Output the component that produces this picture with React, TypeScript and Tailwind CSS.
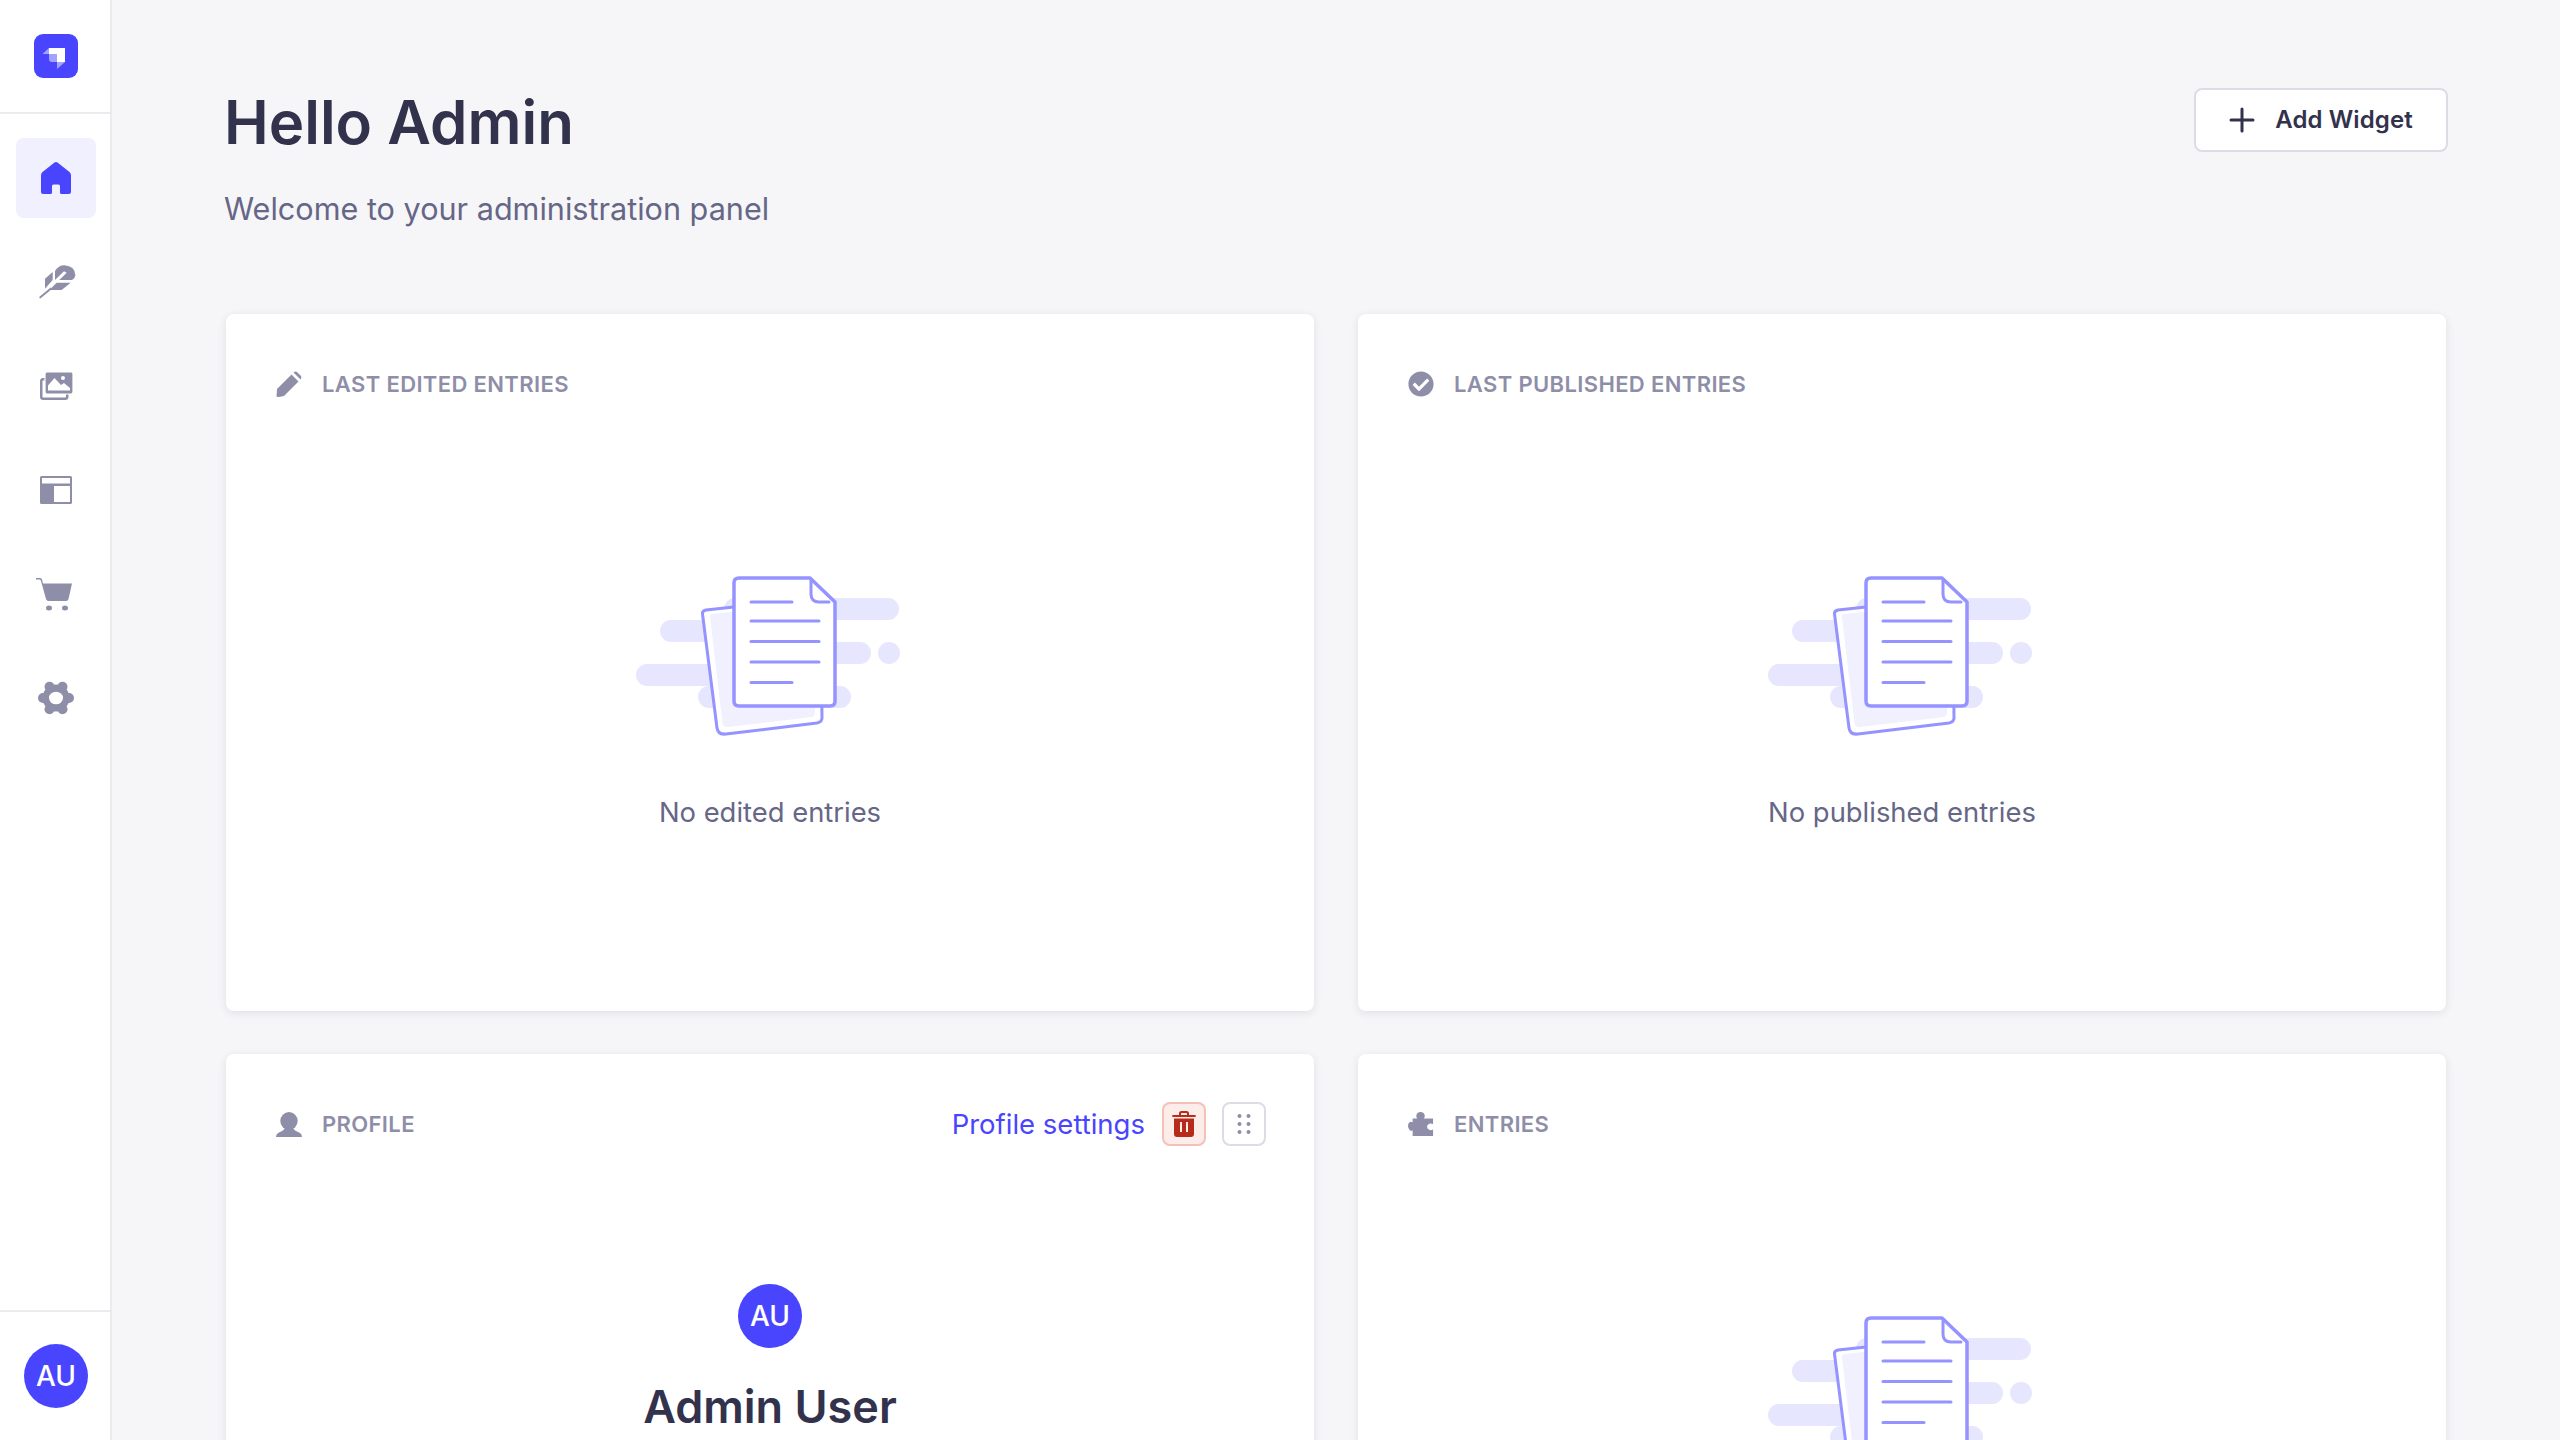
import React from "react";
import { FaCheckCircle } from "react-icons/fa";

function Illustration() {
  return (
    <svg width="340" height="220" viewBox="0 0 340 220" fill="none" className="block shrink-0">
      <g fill="#e6e6ff">
        <rect x="124" y="58" width="175" height="22" rx="11" />
        <rect x="60" y="80" width="120" height="22" rx="11" />
        <rect x="180" y="102" width="91" height="22" rx="11" />
        <circle cx="289" cy="113" r="11" />
        <rect x="36" y="124" width="130" height="22" rx="11" />
        <rect x="98" y="146" width="153" height="22" rx="11" />
      </g>
      <path d="M106 70 L218 58 Q221 58 221 62 L222 178 Q222 182 217 183 L126 194 Q118 195 117 188 L102.500 74 Q102 71 106 70Z" fill="#ffffff" stroke="#9593ff" strokeWidth="3" strokeLinejoin="round" />
      <path d="M112 74 L212 64 Q214 64 214 67 L215 172 Q215 176 212 177 L128 187 Q123 187.500 122.500 183 L110 77 Q110 74 112 74Z" fill="#f0f0ff" />
      <path d="M139 38 H210 L235 62 V161 Q235 166 230 166 H139 Q134 166 134 161 V43 Q134 38 139 38Z" fill="#ffffff" stroke="#9593ff" strokeWidth="3.5" strokeLinejoin="round" />
      <path d="M211 39 V54 Q211 62 219 62 H229" stroke="#9593ff" strokeWidth="3" strokeLinecap="round" fill="none" />
      <g stroke="#9593ff" strokeWidth="3" strokeLinecap="round">
        <path d="M151 62 H192" />
        <path d="M151 81 H219" />
        <path d="M151 101.500 H219" />
        <path d="M151 122 H219" />
        <path d="M151 142.500 H192" />
      </g>
    </svg>
  );
}

function NavItem({ active, children }: { active?: boolean; children: React.ReactNode }) {
  return (
    <div className={active ? "w-20 h-20 rounded-lg bg-[#f0f0ff] flex items-center justify-center" : "w-20 h-20 rounded-lg flex items-center justify-center"}>
      {children}
    </div>
  );
}

function Avatar() {
  return (
    <div className="w-16 h-16 rounded-full bg-[#4945ff] flex items-center justify-center text-white text-[28px] font-medium">AU</div>
  );
}

function Label({ icon, children }: { icon: React.ReactNode; children: React.ReactNode }) {
  return (
    <div className="flex items-center h-11">
      <span className="w-[26px] h-[26px] flex items-center justify-center text-[#8e8ea9]">{icon}</span>
      <span className="ml-[20px] text-[22px] font-semibold tracking-[0.37px] text-[#8e8ea9] uppercase">{children}</span>
    </div>
  );
}

function Card({ children }: { children: React.ReactNode }) {
  return <div className="h-[697px] bg-white rounded-lg shadow-[0_2px_8px_rgba(33,33,52,0.1)] pt-[48px] px-[50px]">{children}</div>;
}

function Empty({ text }: { text: string }) {
  return (
    <div className="flex flex-col items-center mt-[134px]">
      <Illustration />
      <div className="mt-[34px] text-[27.4px] leading-[36px] text-[#666687]">{text}</div>
    </div>
  );
}

export default function App() {
  return (
    <div className="w-[2560px] h-[1440px] overflow-hidden flex bg-[#f6f6f9] font-['Inter',sans-serif]">
      <aside className="w-[112px] h-full shrink-0 bg-white border-r-2 border-[#eaeaef] flex flex-col">
        <div className="h-[114px] shrink-0 pl-[2px] border-b-2 border-[#eaeaef] flex items-center justify-center">
          <svg width="44" height="44" viewBox="0 0 44 44">
            <rect width="44" height="44" rx="9" fill="#4945ff" />
            <path d="M15 14 H31 V28 H23 V20 H15Z" fill="#ffffff" />
            <path d="M15 20 H23 V28 H18 Q15 28 15 25Z M8.500 20 L15 14 V20Z M23 28 H31 L23 35Z" fill="#ffffff" opacity="0.5" />
          </svg>
        </div>
        <nav className="flex-1 pl-[2px] flex flex-col items-center gap-6 pt-6">
          <NavItem active>
            <svg width="30" height="32" viewBox="0 0 30 32" fill="#4945ff"><path d="M13.500 .5 Q15 -.3 16.500 .5 L28.500 10 Q30 11.200 30 13.500 V30 Q30 32 28 32 H20.500 Q19 32 19 30.500 V24 Q19 22.500 17.500 22.500 H12.500 Q11 22.500 11 24 V30.500 Q11 32 9.500 32 H2 Q0 32 0 30 V13.500 Q0 11.200 1.500 10Z" /></svg>
          </NavItem>
          <NavItem>
            <svg width="52" height="52" viewBox="0 0 156 156" fill="#8e8ea9">
              <path d="M45 68 L68 48 V72 L45 98Z" />
              <path d="M75 45 Q85 28 103 28 Q135 30 136 58 Q135 68 125 72 H88 L110 50 L102 46 L75 72Z" />
              <path d="M80 80 H122 L95 102 H58Z" />
              <path d="M31 124 L62 98" stroke="#8e8ea9" strokeWidth="6" strokeLinecap="round" />
            </svg>
          </NavItem>
          <NavItem>
            <svg width="33" height="28" viewBox="0 0 33 28">
              <rect x="1.250" y="7.250" width="26" height="19.500" rx="2" fill="none" stroke="#8e8ea9" strokeWidth="2.500" />
              <rect x="5" y="0" width="28" height="22" rx="2" fill="#8e8ea9" stroke="#ffffff" strokeWidth="1.200" />
              <path d="M8 18.500 V13.500 L14.500 6 L21 13 L24 11 L30 16 V18.500Z" fill="#ffffff" />
              <circle cx="23" cy="6" r="2" fill="#ffffff" />
            </svg>
          </NavItem>
          <NavItem>
            <svg width="32" height="28" viewBox="0 0 32 28"><path fillRule="evenodd" fill="#8e8ea9" d="M1.500 0 H30.500 Q32 0 32 1.500 V26.500 Q32 28 30.500 28 H1.500 Q0 28 0 26.500 V1.500 Q0 0 1.500 0Z M2 2 V7.500 H30 V2Z M14 10 V26 H30 V10Z" /></svg>
          </NavItem>
          <NavItem>
            <svg width="36" height="33" viewBox="0 0 36 33" fill="#8e8ea9" className="-translate-x-[2px]"><path d="M0 0 H4 Q5.500 0 6 1.500 L7 5.500 H36 L32.500 21 Q32 23 30 23 H12.500 Q10.500 23 10 21 L5 3 Q4.700 1.500 3.500 1.500 H0Z" /><ellipse cx="13" cy="30" rx="3" ry="2.500" /><ellipse cx="29" cy="30" rx="3" ry="2.500" /></svg>
          </NavItem>
          <NavItem>
            <svg width="36" height="34" viewBox="0 0 36 34" fill="#8e8ea9">
              <circle cx="18" cy="17" r="13.500" />
              <circle cx="5" cy="17" r="5" />
              <circle cx="31" cy="17" r="5" />
              <circle cx="11.500" cy="5.800" r="5" />
              <circle cx="24.500" cy="5.800" r="5" />
              <circle cx="11.500" cy="28.200" r="5" />
              <circle cx="24.500" cy="28.200" r="5" />
              <ellipse cx="18" cy="17" rx="7" ry="6.300" fill="#ffffff" />
            </svg>
          </NavItem>
        </nav>
        <div className="h-[130px] shrink-0 pl-[2px] border-t-2 border-[#eaeaef] flex items-center justify-center">
          <Avatar />
        </div>
      </aside>
      <main className="flex-1 min-w-0 pl-[112px] pr-[112px]">
        <header className="flex justify-between items-start pt-[88px]">
          <div>
            <h1 className="text-[60px] leading-[68px] font-semibold text-[#32324d]">Hello Admin</h1>
            <p className="mt-[33px] text-[30.6px] leading-[40px] text-[#666687]">Welcome to your administration panel</p>
          </div>
          <button className="w-[254px] h-16 flex items-center justify-center gap-[20px] bg-white border-2 border-[#dcdce4] rounded-lg text-[#32324d] text-[24px] font-semibold tracking-[0.1px]">
            <svg width="26" height="26" viewBox="0 0 26 26" stroke="#32324d" strokeWidth="3" strokeLinecap="round"><path d="M13 2 V24 M2 13 H24" /></svg>
            Add Widget
          </button>
        </header>
        <div className="mt-[85px] px-[2px] grid grid-cols-2 gap-x-[44px] gap-y-[43px]">
          <Card>
            <Label icon={
              <svg width="26" height="26" viewBox="0 0 26 26" fill="currentColor">
                <path d="M0.500 25.500 L1 18 L15.500 3.500 L22.500 10.500 L8 25 Q1 26.500 0.500 25.500Z" />
                <path d="M17.500 1.500 Q19.500 0 21 1 L25 5 Q26 6.500 24.500 8.500Z" />
              </svg>
            }>Last edited entries</Label>
            <Empty text="No edited entries" />
          </Card>
          <Card>
            <Label icon={<FaCheckCircle size={26} />}>Last published entries</Label>
            <Empty text="No published entries" />
          </Card>
          <Card>
            <div className="flex items-center justify-between -mr-[2px]">
              <Label icon={
                <svg width="26" height="25" viewBox="0 0 26 25" fill="currentColor">
                  <ellipse cx="13" cy="9" rx="8.700" ry="9" />
                  <path d="M9 16 H17 L19 18.500 L24 21 Q26 22.500 26 25 H0 Q0 22.500 2 21 L7 18.500Z" />
                </svg>
              }>Profile</Label>
              <div className="flex items-center gap-4">
                <span className="text-[27.5px] leading-[36px] text-[#4945ff] mr-[1px]">Profile settings</span>
                <div className="w-11 h-11 rounded-lg bg-[#fcecea] border-2 border-[#f5c0b8] flex items-center justify-center">
                  <svg width="24" height="26" viewBox="0 0 24 26" fill="#b72b1a">
                    <path d="M7 4 V2.500 Q7 0 9.500 0 H14.500 Q17 0 17 2.500 V4 H22.500 Q24 4 24 5 Q24 6 22.500 6 H1.500 Q0 6 0 5 Q0 4 1.500 4Z M9 4 H15 V2.500 Q15 2 14.500 2 H9.500 Q9 2 9 2.500Z" fillRule="evenodd" />
                    <path fillRule="evenodd" d="M2 7.500 H22 V23 Q22 26 19 26 H5 Q2 26 2 23Z M8 11 V21 H10 V11Z M14 11 V21 H16 V11Z" />
                  </svg>
                </div>
                <div className="w-11 h-11 rounded-lg bg-white border-2 border-[#dcdce4] flex items-center justify-center">
                  <svg width="14" height="22" viewBox="0 0 14 22" fill="#8e8ea9"><circle cx="2.500" cy="3" r="2" /><circle cx="11.500" cy="3" r="2" /><circle cx="2.500" cy="11" r="2" /><circle cx="11.500" cy="11" r="2" /><circle cx="2.500" cy="19" r="2" /><circle cx="11.500" cy="19" r="2" /></svg>
                </div>
              </div>
            </div>
            <div className="flex flex-col items-center mt-[138px]">
              <Avatar />
              <div className="mt-[29px] text-[45px] leading-[60px] font-semibold text-[#32324d]">Admin User</div>
            </div>
          </Card>
          <Card>
            <Label icon={
              <svg width="28" height="26" viewBox="0 0 28 26" fill="currentColor">
                <path d="M5 7 H10 Q8.500 5.500 9 3.500 Q10 0 13.500 0 Q17 0 18 3.500 Q18.500 5.500 17 7 H27 V13 Q25 12 23.500 12.500 Q20.500 13.500 20.500 16 Q20.500 18.500 23.500 19.500 Q25 20 27 19 V26 H5 V20 Q3 21 1.800 19.500 Q0 18 0 15 Q0 12 2 10.800 Q3.500 10 5 11Z" />
              </svg>
            }>Entries</Label>
            <Empty text="No entries" />
          </Card>
        </div>
      </main>
    </div>
  );
}
